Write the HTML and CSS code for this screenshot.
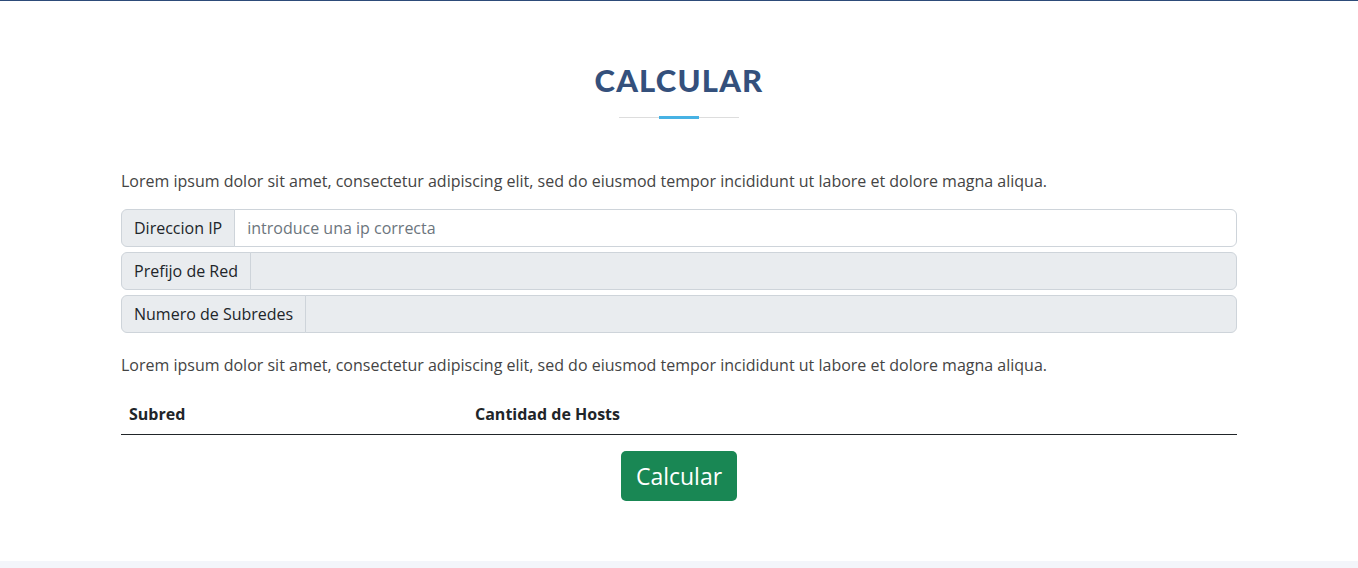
FILE: index.html
```html
<!DOCTYPE html>
<html lang="es">
<head>
<meta charset="utf-8">
<title>Calcular</title>
<link rel="stylesheet" href="styles.css">
</head>
<body>
<div class="topbar"></div>
<section class="section">
  <div class="container">
    <div class="section-title">
      <h2>Calcular</h2>
      <div class="title-line"></div>
    </div>
    <p class="lead-text">Lorem ipsum dolor sit amet, consectetur adipiscing elit, sed do eiusmod tempor incididunt ut labore et dolore magna aliqua.</p>
    <div class="input-group">
      <span class="input-group-text">Direccion IP</span>
      <input class="form-control" type="text" placeholder="introduce una ip correcta">
    </div>
    <div class="input-group">
      <span class="input-group-text">Prefijo de Red</span>
      <input class="form-control" type="text" disabled>
    </div>
    <div class="input-group">
      <span class="input-group-text">Numero de Subredes</span>
      <input class="form-control" type="text" disabled>
    </div>
    <p class="lead-text second">Lorem ipsum dolor sit amet, consectetur adipiscing elit, sed do eiusmod tempor incididunt ut labore et dolore magna aliqua.</p>
    <table class="table">
      <thead>
        <tr><th class="col-subred">Subred</th><th>Cantidad de Hosts</th></tr>
      </thead>
    </table>
    <div class="actions">
      <button class="btn-calc" type="button">Calcular</button>
    </div>
  </div>
</section>
<footer class="footer"></footer>
</body>
</html>
```
FILE: styles.css
```css
html, body {
  margin: 0;
  padding: 0;
}
body {
  background: #f3f5fa;
  font-family: "Open Sans", "Liberation Sans", sans-serif;
  color: #444444;
  font-size: 16px;
}
.topbar {
  height: 1px;
  background: #2d4b79;
}
.section {
  background: #ffffff;
  padding: 61px 0 60px;
}
.container {
  width: 1116px;
  margin: 0 auto;
}
.section-title {
  text-align: center;
  padding-bottom: 50px;
}
.section-title h2 {
  margin: 0 0 18px;
  font-family: "Lato", "Open Sans", sans-serif;
  font-weight: 900;
  font-size: 31px;
  line-height: 36px;
  letter-spacing: 1.2px;
  text-transform: uppercase;
  color: #34507c;
}
.title-line {
  width: 120px;
  height: 3px;
  margin: 0 auto;
  background:
    linear-gradient(#47b2e4, #47b2e4) center / 40px 3px no-repeat,
    linear-gradient(#dddddd, #dddddd) center / 120px 1px no-repeat;
}
.lead-text {
  margin: 0 0 16px;
  line-height: 24px;
}
.lead-text.second {
  margin-top: 20px;
  margin-bottom: 17px;
}
.input-group {
  display: flex;
  height: 38px;
  margin-bottom: 5px;
}
.input-group-text {
  display: flex;
  align-items: center;
  padding: 0 12px;
  background: #e9ecef;
  border: 1px solid #ced4da;
  border-radius: 6px 0 0 6px;
  color: #212529;
  font-size: 16px;
  white-space: nowrap;
}
.form-control {
  flex: 1;
  min-width: 0;
  margin: 0;
  margin-left: -1px;
  padding: 0 12px;
  border: 1px solid #ced4da;
  border-radius: 0 6px 6px 0;
  background: #ffffff;
  font-family: "Open Sans", "Liberation Sans", sans-serif;
  font-size: 16px;
  color: #212529;
  outline: none;
}
.form-control::placeholder {
  color: #6c757d;
  opacity: 1;
}
.form-control:disabled {
  background: #e9ecef;
}
.table {
  width: 100%;
  border-collapse: collapse;
  margin-bottom: 16px;
}
.table th {
  text-align: left;
  padding: 8px;
  line-height: 24px;
  font-weight: 700;
  color: #212529;
  border-bottom: 1px solid #212529;
}
.table th.col-subred {
  width: 330px;
}
.actions {
  display: flex;
  justify-content: center;
}
.btn-calc {
  width: 116px;
  height: 50px;
  padding: 0;
  border: none;
  border-radius: 5px;
  background: #198754;
  color: #ffffff;
  font-family: "Open Sans", "Liberation Sans", sans-serif;
  font-size: 23px;
}
.footer {
  height: 20px;
}
```
